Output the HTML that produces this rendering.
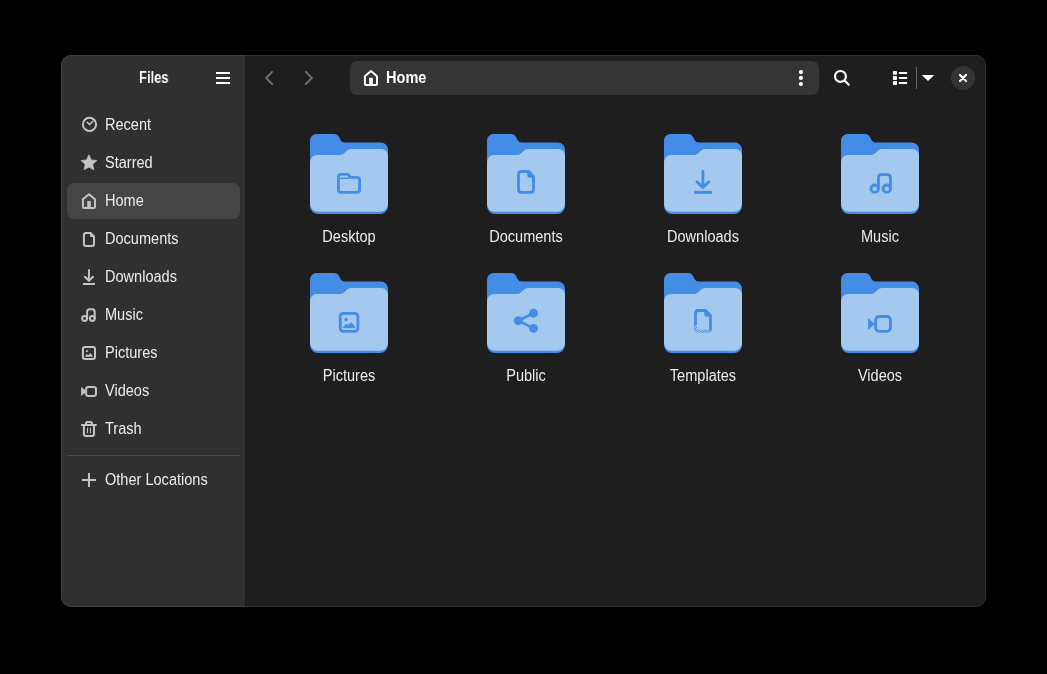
<!DOCTYPE html>
<html><head><meta charset="utf-8">
<style>
*{margin:0;padding:0;box-sizing:border-box}
html,body{width:1047px;height:674px;background:#000;overflow:hidden;font-family:"Liberation Sans",sans-serif;position:relative}
.win{position:absolute;left:61px;top:55px;width:925px;height:552px;border-radius:10px;background:#1e1e1e}
.side{position:absolute;left:61px;top:55px;width:184px;height:552px;background:#303030;border-radius:10px 0 0 10px}
.t{position:absolute;white-space:nowrap;will-change:transform;transform:scaleY(1.07);transform-origin:0 15px;color:#fff;font-size:14.55px;line-height:20px}
.st{color:#ececec}
.b{font-weight:bold}
.brd{position:absolute;left:61px;top:55px;width:925px;height:552px;border-radius:10px;border:1px solid rgba(255,255,255,0.09)}
.sel{position:absolute;left:67px;top:183px;width:173px;height:36px;border-radius:7px;background:#454545}
.sep{position:absolute;left:67px;top:455px;width:173px;height:1px;background:#4a4a4a}
.vsep{position:absolute;left:916px;top:67px;width:1px;height:22px;background:#666}
svg{position:absolute;overflow:visible}
.path{position:absolute;left:350px;top:61px;width:469px;height:34px;border-radius:7px;background:#353535}
.close{position:absolute;left:951px;top:66px;width:24px;height:24px;border-radius:50%;background:#353535}
.lbl{position:absolute;will-change:transform;transform:scaleY(1.07);transform-origin:0 15px;width:160px;text-align:center;color:#ececec;font-size:14.55px;line-height:20px;white-space:nowrap}
</style></head><body>
<svg width="0" height="0" style="position:absolute;left:0;top:0">
<defs>
<g id="folder">
<path fill="#438de6" d="M0,6.5 A6.5,6.5 0 0 1 6.5,0 L24,0 Q27.5,0 29,3 L30.5,6 Q31.8,8.6 35,8.6 L71,8.6 A7,7 0 0 1 78,15.6 L78,72 A8,8 0 0 1 70,80 L8,80 A8,8 0 0 1 0,72 Z"/>
<path fill="#a4c8ee" d="M0,28 A7,7 0 0 1 7,21 L30,21 Q32.5,21 34.5,19 L36.5,17 Q38.5,15 41,15 L71.5,15 A6.5,6.5 0 0 1 78,21.5 L78,69.8 A8,8 0 0 1 70,77.8 L8,77.8 A8,8 0 0 1 0,69.8 Z"/>
</g>
</defs>
</svg>
<div class="win"></div>
<div class="side"></div>
<div class="sel"></div>
<div class="sep"></div>
<div class="path"></div>
<div class="close"></div>
<div class="vsep"></div>
<div class="t b" style="left:139px;top:68px;transform:scale(0.89,1.07);transform-origin:0 15px">Files</div>
<div class="t b" style="left:386px;top:68px">Home</div>
<div class="t st" style="left:105px;top:115px;">Recent</div>
<div class="t st" style="left:105px;top:153px;">Starred</div>
<div class="t st" style="left:105px;top:191px;">Home</div>
<div class="t st" style="left:105px;top:229px;">Documents</div>
<div class="t st" style="left:105px;top:267px;">Downloads</div>
<div class="t st" style="left:105px;top:305px;">Music</div>
<div class="t st" style="left:105px;top:343px;">Pictures</div>
<div class="t st" style="left:105px;top:381px;">Videos</div>
<div class="t st" style="left:105px;top:419px;">Trash</div>
<div class="t st" style="left:105px;top:470px;">Other Locations</div>
<svg style="left:78px;top:112px" width="22" height="22"><circle cx="11.5" cy="12.4" r="6.6" fill="none" stroke="#c4c4c4" stroke-width="2"/><path d="M9.2,10.3 L11.4,12.6 L14.9,9.3" fill="none" stroke="#c4c4c4" stroke-width="1.5" stroke-linecap="round" stroke-linejoin="round"/></svg>
<svg style="left:78px;top:151px" width="22" height="22"><polygon points="10.95,3.90 13.24,8.94 18.75,9.57 14.66,13.31 15.77,18.73 10.95,16.00 6.13,18.73 7.24,13.31 3.15,9.57 8.66,8.94" fill="#c4c4c4" stroke="#c4c4c4" stroke-width="0.8" stroke-linejoin="round"/></svg>
<svg style="left:78px;top:190px" width="22" height="22"><path d="M4.9,17 L4.9,9.3 L10.95,4.3 L17,9.3 L17,17 Q17,18 16,18 L5.9,18 Q4.9,18 4.9,17 Z" fill="none" stroke="#c4c4c4" stroke-width="2" stroke-linecap="round" stroke-linejoin="round"/><rect x="9.2" y="11.1" width="3.6" height="7" fill="#c4c4c4"/></svg>
<svg style="left:78px;top:227px" width="22" height="22"><path d="M8,5.9 L12.5,5.9 L16,9.4 L16,16.9 Q16,18.9 14,18.9 L7.9,18.9 Q5.9,18.9 5.9,16.9 L5.9,7.9 Q5.9,5.9 8,5.9 Z" fill="none" stroke="#c4c4c4" stroke-width="2" stroke-linecap="round" stroke-linejoin="round"/><path d="M12.5,6.2 L12.5,9.4 L15.8,9.4 Z" fill="#c4c4c4" stroke="#c4c4c4" stroke-width="1" stroke-linejoin="round"/></svg>
<svg style="left:78px;top:265px" width="22" height="22"><path d="M10.95,4.9 L10.95,15.5 M6.9,11.8 L10.95,15.8 L15,11.8" fill="none" stroke="#c4c4c4" stroke-width="2" stroke-linecap="round" stroke-linejoin="round"/><rect x="4.9" y="18" width="12.1" height="2" fill="#c4c4c4"/></svg>
<svg style="left:78px;top:303px" width="22" height="22"><path d="M9.1,15.4 L9.1,8.7 Q9.1,6.2 11.6,6.2 L14.2,6.2 Q16.7,6.2 16.7,8.7 L16.7,15.4" fill="none" stroke="#c4c4c4" stroke-width="2" stroke-linecap="round" stroke-linejoin="round"/><circle cx="6.6" cy="15.5" r="2.4" fill="none" stroke="#c4c4c4" stroke-width="2" stroke-linecap="round" stroke-linejoin="round"/><circle cx="14.3" cy="15.5" r="2.4" fill="none" stroke="#c4c4c4" stroke-width="2" stroke-linecap="round" stroke-linejoin="round"/></svg>
<svg style="left:78px;top:341px" width="22" height="22"><rect x="4.9" y="5.9" width="12.1" height="12.1" rx="2.2" fill="none" stroke="#c4c4c4" stroke-width="2" stroke-linecap="round" stroke-linejoin="round"/><rect x="8" y="9.2" width="1.8" height="1.8" fill="#c4c4c4"/><path d="M7,15.8 L8.8,13.1 L10.5,14 L12.6,12.1 L14.9,15.8 Z" fill="#c4c4c4"/></svg>
<svg style="left:78px;top:379px" width="22" height="22"><rect x="8.1" y="8" width="9.9" height="9" rx="2.2" fill="none" stroke="#c4c4c4" stroke-width="2" stroke-linecap="round" stroke-linejoin="round"/><path d="M3.1,8 L3.1,17 L7.6,13.6 L7.6,11.4 Z" fill="#c4c4c4"/></svg>
<svg style="left:78px;top:417px" width="22" height="22"><path d="M3.9,8 L18,8 M5.9,9 L5.9,17 Q5.9,18.9 7.9,18.9 L14,18.9 Q16,18.9 16,17 L16,9 M8,8 L8,6.8 Q8,5.1 9.7,5.1 L12.2,5.1 Q14,5.1 14,6.8 L14,8" fill="none" stroke="#c4c4c4" stroke-width="2" stroke-linecap="round" stroke-linejoin="round"/><path d="M9.5,10.7 L9.5,16.2 M12.4,10.7 L12.4,16.2" stroke="#c4c4c4" stroke-width="1"/></svg>
<svg style="left:78px;top:469px" width="22" height="22"><path d="M3.9,10.95 L18.1,10.95 M10.95,3.9 L10.95,18.1" fill="none" stroke="#c4c4c4" stroke-width="2"/></svg>
<svg style="left:210px;top:67px" width="22" height="22"><path d="M6,6 L20,6 M6,11 L20,11 M6,16 L20,16" stroke="#ffffff" stroke-width="2"/></svg>
<svg style="left:258px;top:67px" width="22" height="22"><path d="M14.05,4.9 L8.2,10.95 L14.05,17" fill="none" stroke="#6e6e6e" stroke-width="2" stroke-linecap="round" stroke-linejoin="round"/></svg>
<svg style="left:297px;top:67px" width="22" height="22"><path d="M8.8,4.9 L14.9,10.95 L8.8,17" fill="none" stroke="#6e6e6e" stroke-width="2" stroke-linecap="round" stroke-linejoin="round"/></svg>
<svg style="left:360px;top:67px" width="22" height="22"><path d="M4.9,17 L4.9,9.3 L10.95,4.1 L17,9.3 L17,17 Q17,18 16,18 L5.9,18 Q4.9,18 4.9,17 Z" fill="none" stroke="#fff" stroke-width="2" stroke-linecap="round" stroke-linejoin="round"/><rect x="9.15" y="10.8" width="3.7" height="7.2" fill="#fff"/></svg>
<svg style="left:790px;top:67px" width="22" height="22"><circle cx="10.95" cy="5.07" r="2.1" fill="#fff"/><circle cx="10.95" cy="10.95" r="2.1" fill="#fff"/><circle cx="10.95" cy="17" r="2.1" fill="#fff"/></svg>
<svg style="left:831px;top:67px" width="22" height="22"><circle cx="9.45" cy="9.4" r="5.45" fill="none" stroke="#fff" stroke-width="2.1"/><path d="M13.6,13.6 L17.8,17.8" stroke="#fff" stroke-width="2.1" stroke-linecap="round"/></svg>
<svg style="left:888px;top:67px" width="22" height="22"><rect x="4.9" y="3.9" width="4.1" height="3.9" rx="0.8" fill="#fff"/><rect x="4.9" y="9" width="4.1" height="3.9" rx="0.8" fill="#fff"/><rect x="4.9" y="14.1" width="4.1" height="3.9" rx="0.8" fill="#fff"/><rect x="10.9" y="4.9" width="8.2" height="2.1" rx="0.5" fill="#fff"/><rect x="10.9" y="10" width="8.2" height="2.1" rx="0.5" fill="#fff"/><rect x="10.9" y="14.9" width="8.2" height="2.1" rx="0.5" fill="#fff"/></svg>
<svg style="left:910px;top:62px" width="30" height="30"><path d="M11.8,12.9 L24.25,12.9 L18,19.1 Z" fill="#fff"/></svg>
<svg style="left:952px;top:67px" width="22" height="22"><path d="M8,8 L14,14 M14,8 L8,14" stroke="#fff" stroke-width="2.2" stroke-linecap="round"/></svg>
<svg style="left:310px;top:134px" width="78" height="80"><use href="#folder"/></svg>
<svg style="left:334px;top:168px" width="30" height="30"><path d="M4.4,9 Q4.4,6.3 7.2,6.3 L13.8,6.3 L16.6,9.3 L22.8,9.3 Q25.6,9.3 25.6,12.1 L25.6,21.7 Q25.6,24.4 22.8,24.4 L7.2,24.4 Q4.4,24.4 4.4,21.7 Z" fill="none" stroke="#438de6" stroke-width="2.8" stroke-linecap="round" stroke-linejoin="round"/><path d="M4.4,10.3 L15.5,10.3" stroke="#438de6" stroke-width="1.4"/></svg>
<div class="lbl" style="left:269px;top:226.7px">Desktop</div>
<svg style="left:487px;top:134px" width="78" height="80"><use href="#folder"/></svg>
<svg style="left:511px;top:168px" width="30" height="30"><path d="M10.5,3.5 L17.6,3.5 L22.5,8.4 L22.5,21.3 Q22.5,24.3 19.5,24.3 L10.5,24.3 Q7.5,24.3 7.5,21.3 L7.5,6.5 Q7.5,3.5 10.5,3.5 Z" fill="none" stroke="#438de6" stroke-width="2.8" stroke-linecap="round" stroke-linejoin="round"/><path d="M17,3.5 L17,7.5 Q17,9 18.5,9 L22.5,9 Z" fill="#438de6" stroke="#438de6" stroke-width="1.4" stroke-linejoin="round"/></svg>
<div class="lbl" style="left:446px;top:226.7px">Documents</div>
<svg style="left:664px;top:134px" width="78" height="80"><use href="#folder"/></svg>
<svg style="left:688px;top:168px" width="30" height="30"><path d="M14.95,3.5 L14.95,19 M8.9,13.8 L14.95,19.6 L20.9,13.8" fill="none" stroke="#438de6" stroke-width="2.8" stroke-linecap="round" stroke-linejoin="round"/><rect x="6" y="22.9" width="18" height="2.9" fill="#438de6"/></svg>
<div class="lbl" style="left:623px;top:226.7px">Downloads</div>
<svg style="left:841px;top:134px" width="78" height="80"><use href="#folder"/></svg>
<svg style="left:865px;top:168px" width="30" height="30"><path d="M13.45,20.7 L13.45,9.5 Q13.45,6.55 16.45,6.55 L22.45,6.55 Q25.45,6.55 25.45,9.5 L25.45,20.7" fill="none" stroke="#438de6" stroke-width="2.8" stroke-linecap="round" stroke-linejoin="round"/><circle cx="9.7" cy="20.7" r="3.7" fill="none" stroke="#438de6" stroke-width="2.8" stroke-linecap="round" stroke-linejoin="round"/><circle cx="21.75" cy="20.7" r="3.7" fill="none" stroke="#438de6" stroke-width="2.8" stroke-linecap="round" stroke-linejoin="round"/></svg>
<div class="lbl" style="left:800px;top:226.7px">Music</div>
<svg style="left:310px;top:273px" width="78" height="80"><use href="#folder"/></svg>
<svg style="left:334px;top:307px" width="30" height="30"><rect x="6.2" y="6.4" width="17.7" height="17.9" rx="3" fill="none" stroke="#438de6" stroke-width="2.8" stroke-linecap="round" stroke-linejoin="round"/><circle cx="12" cy="12.5" r="1.7" fill="#438de6"/><path d="M9.1,20.7 L12.2,17.1 L14.2,18.2 L17.4,15.8 L20.7,19.8 L20.7,20.7 Z" fill="#438de6" stroke="#438de6" stroke-width="0.8" stroke-linejoin="round"/></svg>
<div class="lbl" style="left:269px;top:365.7px">Pictures</div>
<svg style="left:487px;top:273px" width="78" height="80"><use href="#folder"/></svg>
<svg style="left:511px;top:307px" width="30" height="30"><circle cx="22.5" cy="6.2" r="4.45" fill="#438de6"/><circle cx="7.3" cy="13.6" r="4.45" fill="#438de6"/><circle cx="22.5" cy="21.4" r="4.45" fill="#438de6"/><path d="M7.3,13.6 L22.5,6.2 M7.3,13.6 L22.5,21.4" stroke="#438de6" stroke-width="2.7"/></svg>
<div class="lbl" style="left:446px;top:365.7px">Public</div>
<svg style="left:664px;top:273px" width="78" height="80"><use href="#folder"/></svg>
<svg style="left:688px;top:307px" width="30" height="30"><path d="M7.5,16.9 L7.5,6.5 Q7.5,3.5 10.5,3.5 L17.6,3.5 L22.5,8.4 L22.5,22.2" fill="none" stroke="#438de6" stroke-width="2.8" stroke-linecap="round" stroke-linejoin="round"/><path d="M17,3.5 L17,7.5 Q17,9 18.5,9 L22.5,9 Z" fill="#438de6" stroke="#438de6" stroke-width="1.4" stroke-linejoin="round"/><defs><pattern id="chk" x="0" y="0.1" width="3" height="3" patternUnits="userSpaceOnUse"><rect x="0" y="0" width="1.5" height="1.5" fill="#438de6"/><rect x="1.5" y="1.5" width="1.5" height="1.5" fill="#438de6"/></pattern></defs><path d="M7.5,17.6 L7.5,22 Q7.5,24.3 10,24.3 L20,24.3 Q22.5,24.3 22.5,22.3" fill="none" stroke="url(#chk)" stroke-width="2.9"/></svg>
<div class="lbl" style="left:623px;top:365.7px">Templates</div>
<svg style="left:841px;top:273px" width="78" height="80"><use href="#folder"/></svg>
<svg style="left:865px;top:307px" width="30" height="30"><rect x="10.6" y="9.5" width="14.8" height="14.8" rx="3.5" fill="none" stroke="#438de6" stroke-width="2.8" stroke-linecap="round" stroke-linejoin="round"/><path d="M3.1,11.1 L3.1,22.9 L9.8,16.9 Z" fill="#438de6"/></svg>
<div class="lbl" style="left:800px;top:365.7px">Videos</div>
<div class="brd"></div>
</body></html>
